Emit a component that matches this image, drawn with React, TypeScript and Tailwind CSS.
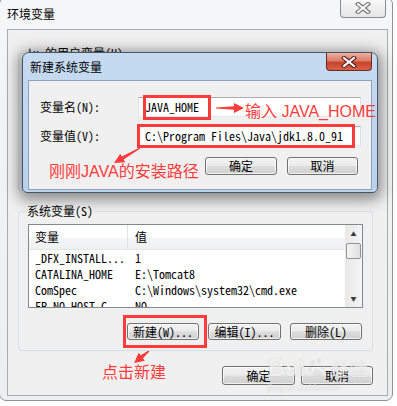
import type { ReactNode } from 'react'

const sys = "font-['Noto_Sans_Mono_CJK_SC','Liberation_Mono','Noto_Sans_CJK_SC',monospace]"
const ui = "font-['Noto_Sans_CJK_SC','Liberation_Sans',sans-serif]"
const note = "font-['Liberation_Sans','Noto_Sans_CJK_SC',sans-serif]"

const rows = [
  ['_DFX_INSTALL...', '1'],
  ['CATALINA_HOME', 'E:\\Tomcat8'],
  ['ComSpec', 'C:\\Windows\\system32\\cmd.exe'],
  ['FP_NO_HOST_C...', 'NO'],
]

function arrowPoints(x1: number, y1: number, x2: number, y2: number) {
  const len = Math.hypot(x2 - x1, y2 - y1)
  const ux = (x2 - x1) / len
  const uy = (y2 - y1) / len
  const nx = -uy
  const ny = ux
  const bx = x2 - ux * 10
  const by = y2 - uy * 10
  const p = (x: number, y: number) => `${x.toFixed(1)},${y.toFixed(1)}`
  return [
    p(x1 + nx * 0.6, y1 + ny * 0.6),
    p(bx + nx * 1.8, by + ny * 1.8),
    p(bx + nx * 5, by + ny * 5),
    p(x2, y2),
    p(bx - nx * 5, by - ny * 5),
    p(bx - nx * 1.8, by - ny * 1.8),
    p(x1 - nx * 0.6, y1 - ny * 0.6),
  ].join(' ')
}

function WinButton({ children, className = '' }: { children: ReactNode; className?: string }) {
  return (
    <div
      className={`flex items-center justify-center rounded-[3px] border border-[#707070] bg-[linear-gradient(#f2f2f2_0%,#ebebeb_48%,#dddddd_52%,#cfcfcf_100%)] text-[12px] leading-none text-black shadow-[inset_0_0_0_1px_rgba(255,255,255,0.7)] ${className}`}
    >
      {children}
    </div>
  )
}

function CloseGlyph({ dark, light }: { dark: string; light: string }) {
  return (
    <svg width="16" height="12" viewBox="0 0 16 12">
      <path d="M3 2 L13 10 M13 2 L3 10" stroke={dark} strokeWidth="4.2" strokeLinecap="square" />
      <path d="M3 2 L13 10 M13 2 L3 10" stroke={light} strokeWidth="2" strokeLinecap="square" />
    </svg>
  )
}

function TextField({ value }: { value: string }) {
  return (
    <div className="flex h-[20px] w-[223px] items-center border border-[#abadb3] border-b-[#e3e9ef] border-l-[#e2e3ea] border-r-[#dbdfe6] bg-white pl-[6px] text-[12px] text-black">
      {value}
    </div>
  )
}

export default function App() {
  return (
    <div className={`relative h-[406px] w-[397px] overflow-hidden bg-white ${sys}`}>
      {/* outer window: 环境变量 */}
      <div className="absolute left-[-1px] top-[-3px] flex h-[404px] w-[394px] flex-col rounded-[7px] border border-[#8f9296] bg-[linear-gradient(#f5f6f7,#eceef0)]">
        <div className="flex h-[31px] items-start justify-between">
          <span className={`mt-[9px] pl-[7px] text-[12px] leading-[14px] text-black ${ui}`}>环境变量</span>
          <div className="mr-[6px] flex h-[20px] w-[46px] items-center justify-center rounded-b-[4px] border border-t-0 border-[#8c8c8c] bg-[linear-gradient(#fafafa,#e6e6e6)]">
            <CloseGlyph dark="#6f6f6f" light="#fbfbfb" />
          </div>
        </div>

        <div className="ml-[7px] mr-[4px] flex h-[367px] flex-col border border-[#a8acb1] bg-[#f0f0f0] pl-[10px]">
          <fieldset className="mt-[16px] h-[145px] w-[355px] rounded-[3px] border border-[#d5dfe5]">
            <legend className="ml-[6px] px-[2px] text-[12px] leading-[14px] text-black">lu 的用户变量(U)</legend>
          </fieldset>

          <fieldset className="mt-[13px] flex h-[147px] w-[355px] flex-col rounded-[3px] border border-[#d5dfe5]">
            <legend className="ml-[6px] px-[2px] text-[12px] leading-[14px] text-black">系统变量(S)</legend>
            <div className="ml-[9px] mt-[6px] flex h-[84px] w-[335px] overflow-hidden border border-[#828790] bg-white">
              <div className="flex flex-1 flex-col overflow-hidden">
                <div className="flex h-[25px] shrink-0 border-b border-[#e5e5e5] bg-[linear-gradient(#ffffff_0%,#ffffff_55%,#f4f5f6_56%,#eef0f2_100%)] text-[12px] text-black">
                  <div className="flex w-[99px] items-center border-r border-[#e2e2e2] pl-[6px]">变量</div>
                  <div className="flex flex-1 items-center pl-[7px]">值</div>
                </div>
                {rows.map(([name, value]) => (
                  <div key={name} className="flex h-[16px] shrink-0 items-center text-[12px] text-black">
                    <div className="w-[100px] pl-[6px] whitespace-nowrap">{name}</div>
                    <div className="pl-[6px] whitespace-nowrap">{value}</div>
                  </div>
                ))}
              </div>
              <div className="flex w-[17px] flex-col bg-[linear-gradient(90deg,#e8e8e8,#f5f5f5)]">
                <div className="flex h-[17px] items-center justify-center pt-[1px] text-[6px] leading-none text-[#3a3a3a]">▲</div>
                <div className="mx-[1px] mt-[1px] h-[16px] rounded-[2px] border border-[#959595] bg-[linear-gradient(90deg,#f4f4f4,#e0e0e0)]" />
                <div className="flex-1" />
                <div className="flex h-[17px] items-center justify-center text-[6px] leading-none text-[#3a3a3a]">▼</div>
              </div>
            </div>
            <div className="mt-[15px] flex justify-end gap-[9px] pr-[10px]">
              <WinButton className="h-[17px] w-[72px]">新建(W)...</WinButton>
              <WinButton className="h-[17px] w-[73px]">编辑(I)...</WinButton>
              <WinButton className="h-[17px] w-[72px]">删除(L)</WinButton>
            </div>
          </fieldset>

          <div className="mt-[15px] flex w-[355px] justify-end gap-[6px]">
            <WinButton className="h-[19px] w-[73px]">确定</WinButton>
            <WinButton className="h-[19px] w-[72px]">取消</WinButton>
          </div>
        </div>
      </div>

      {/* inner dialog: 新建系统变量 */}
      <div className="absolute left-[22px] top-[52px] flex h-[141px] w-[356px] flex-col rounded-b-[5px] rounded-t-[7px] border border-[#46566a] bg-[linear-gradient(#c6dbf1,#b9d1ea)] px-[5px] pb-[2px] shadow-[0_3px_14px_4px_rgba(0,0,0,0.42)]">
        <div className="flex h-[27px] shrink-0 items-start justify-between">
          <span className={`mt-[7px] pl-[2px] text-[12px] leading-[14px] text-black ${ui}`}>新建系统变量</span>
          <div className="flex h-[18px] w-[46px] items-center justify-center rounded-b-[4px] border border-t-0 border-[#6b2a1f] bg-[linear-gradient(#eab1a4_0%,#dd7c67_45%,#c8442b_55%,#d9604a_100%)]">
            <CloseGlyph dark="#5a2118" light="#ffffff" />
          </div>
        </div>
        <div className="flex flex-1 flex-col border border-[#8ea3bd] bg-[#f0f0f0]">
          <div className="mt-[16px] flex h-[20px] items-center">
            <div className="w-[109px] pl-[11px] text-[12px] text-black">变量名(N):</div>
            <TextField value="JAVA_HOME" />
          </div>
          <div className="mt-[9px] flex h-[20px] items-center">
            <div className="w-[109px] pl-[11px] text-[12px] text-black">变量值(V):</div>
            <TextField value="C:\Program Files\Java\jdk1.8.0_91" />
          </div>
          <div className="mt-[11px] flex justify-end gap-[10px] pr-[13px]">
            <WinButton className="h-[18px] w-[72px]">确定</WinButton>
            <WinButton className="h-[18px] w-[71px]">取消</WinButton>
          </div>
        </div>
      </div>

      {/* baidu watermark */}
      <div className="pointer-events-none absolute left-[268px] top-[356px] flex flex-col items-start text-white/80 opacity-80 [text-shadow:0_0_1px_#b4b4b4]">
        <div className="flex items-center gap-[2px]">
          <span className={`text-[24px] font-bold leading-none ${note}`}>Bai</span>
          <svg width="22" height="22" viewBox="0 0 22 22" className="opacity-50">
            <ellipse cx="6" cy="6" rx="2.2" ry="3" fill="#d6d6d6" />
            <ellipse cx="12" cy="4" rx="2.2" ry="3" fill="#d6d6d6" />
            <ellipse cx="3" cy="12" rx="2" ry="2.6" fill="#d6d6d6" />
            <ellipse cx="16" cy="10" rx="2" ry="2.6" fill="#d6d6d6" />
            <path d="M9 11 C5 15 4 20 9 20 C11 19 12 19 14 20 C18 20 16 15 9 11 Z" fill="#d6d6d6" />
          </svg>
          <span className={`text-[18px] leading-none ${ui}`}>经验</span>
        </div>
        <span className={`mt-[4px] text-[9px] leading-none ${note}`}>jingyan.baidu.com</span>
      </div>

      {/* red annotations */}
      <div className="pointer-events-none absolute left-[143px] top-[95px] h-[25px] w-[68px] border-[3px] border-[#ff3b3b]" />
      <div className="pointer-events-none absolute left-[137px] top-[124px] h-[24px] w-[218px] border-[3px] border-[#ff3b3b]" />
      <div className="pointer-events-none absolute left-[123px] top-[315px] h-[33px] w-[84px] border-[3px] border-[#ff3b3b]" />
      <svg className="pointer-events-none absolute left-0 top-0" width="397" height="406">
        <polygon points={arrowPoints(216, 108, 244, 108)} fill="#ff3b3b" />
        <polygon points={arrowPoints(140, 148, 114, 163)} fill="#ff3b3b" />
        <polygon points={arrowPoints(149, 351, 134, 363)} fill="#ff3b3b" />
      </svg>
      <div className={`pointer-events-none absolute left-[245px] top-[102px] text-[16px] leading-[20px] text-[#ff3b3b] ${note}`}>输入 JAVA_HOME</div>
      <div className={`pointer-events-none absolute left-[49px] top-[162px] text-[16px] leading-[20px] text-[#ff3b3b] ${note}`}>刚刚JAVA的安装路径</div>
      <div className={`pointer-events-none absolute left-[102px] top-[363px] text-[16px] leading-[20px] text-[#ff3b3b] ${note}`}>点击新建</div>
    </div>
  )
}
